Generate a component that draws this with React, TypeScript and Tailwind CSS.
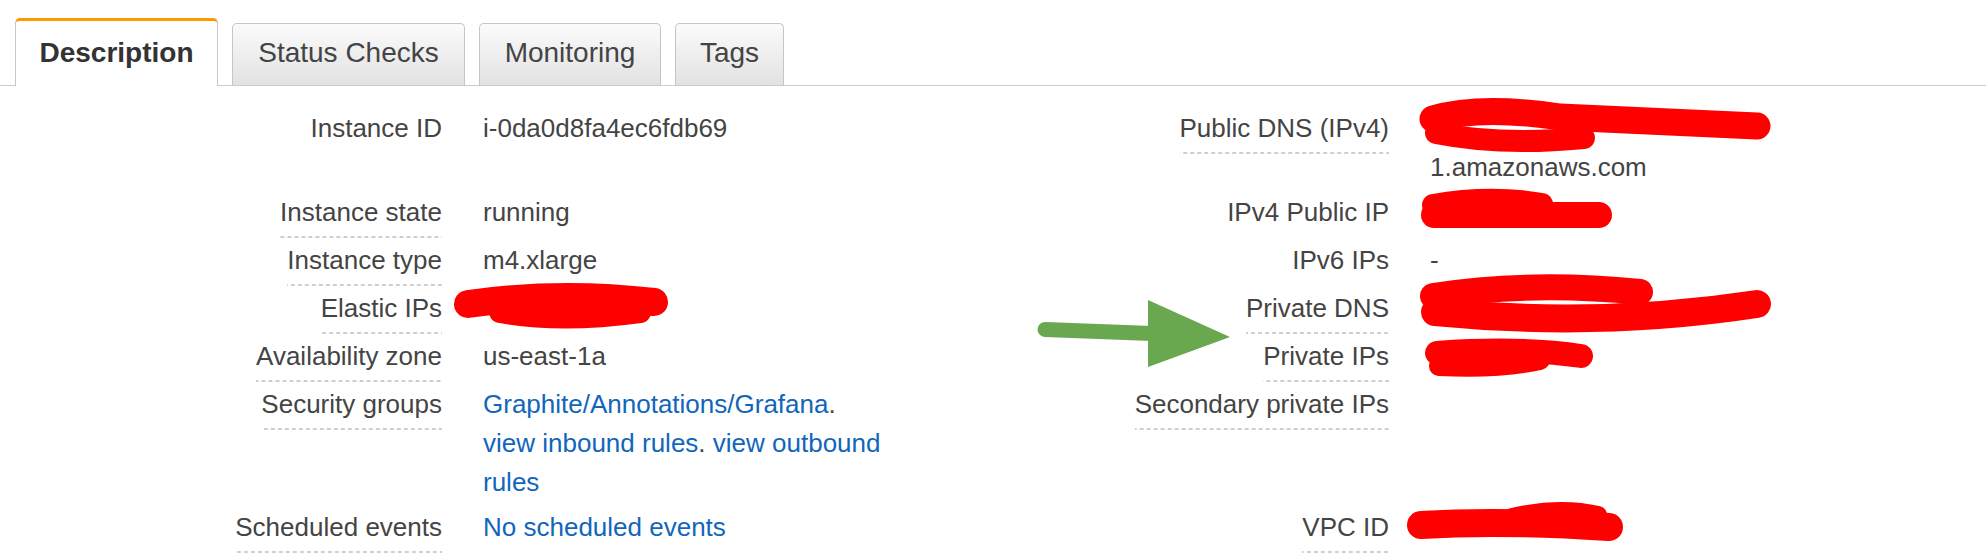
import React from 'react';

type Row = {
  left: string;
  leftLine: boolean;
  leftValue: React.ReactNode;
  right: string;
  rightLine: boolean;
  rightValue: React.ReactNode;
};

const Link = ({ children }: { children: React.ReactNode }) => (
  <a className="text-[#1166bb] cursor-pointer hover:underline">{children}</a>
);

const rows: Row[] = [
  {
    left: 'Instance ID',
    leftLine: false,
    leftValue: 'i-0da0d8fa4ec6fdb69',
    right: 'Public DNS (IPv4)',
    rightLine: true,
    rightValue: (
      <>
        {'\u00a0'}
        <br />
        1.amazonaws.com
      </>
    ),
  },
  { left: 'Instance state', leftLine: true, leftValue: 'running', right: 'IPv4 Public IP', rightLine: false, rightValue: '\u00a0' },
  { left: 'Instance type', leftLine: true, leftValue: 'm4.xlarge', right: 'IPv6 IPs', rightLine: false, rightValue: '-' },
  { left: 'Elastic IPs', leftLine: true, leftValue: '\u00a0', right: 'Private DNS', rightLine: true, rightValue: '\u00a0' },
  { left: 'Availability zone', leftLine: true, leftValue: 'us-east-1a', right: 'Private IPs', rightLine: true, rightValue: '\u00a0' },
  {
    left: 'Security groups',
    leftLine: true,
    leftValue: (
      <>
        <Link>Graphite/Annotations/Grafana</Link>.
        <br />
        <Link>view inbound rules</Link>. <Link>view outbound rules</Link>
      </>
    ),
    right: 'Secondary private IPs',
    rightLine: true,
    rightValue: '',
  },
  {
    left: 'Scheduled events',
    leftLine: true,
    leftValue: <Link>No scheduled events</Link>,
    right: 'VPC ID',
    rightLine: true,
    rightValue: '\u00a0',
  },
];

const Label = ({ text, line }: { text: string; line: boolean }) => (
  <div className="flex justify-end pt-[3px]">
    <span
      className={
        line
          ? 'block whitespace-nowrap leading-[39px] pb-[6px] bg-[linear-gradient(to_right,#cfcfcf_4px,transparent_4px)] bg-size-[7px_2px] bg-repeat-x bg-bottom'
          : 'block whitespace-nowrap leading-[39px] pb-[6px]'
      }
    >
      {text}
    </span>
  </div>
);

const Tabs = () => (
  <div className="h-[86px] flex items-end gap-[14px] pl-[15px] border-b border-[#cccccc]">
    <div className="relative -mb-px w-[203px] h-[68px] bg-white border-t-[3px] border-t-[#ff9900] border-x border-x-[#c8c8c8] rounded-t-[5px] pt-[18px] text-center text-[28px] leading-[28px] font-bold text-[#333]">
      Description
    </div>
    {[
      ['Status Checks', 'w-[233px]'],
      ['Monitoring', 'w-[182px]'],
      ['Tags', 'w-[109px]'],
    ].map(([name, w]) => (
      <div
        key={name}
        className={`${w} h-[62px] border border-b-0 border-[#c6c6c6] rounded-t-[5px] bg-linear-to-b from-[#fbfbfb] to-[#e2e2e2] pt-[15px] text-center text-[28px] leading-[28px] text-[#444]`}
      >
        {name}
      </div>
    ))}
  </div>
);

// red redaction scribbles and the green arrow drawn over the panel
const Marks = () => (
  <svg className="absolute left-0 top-0 pointer-events-none" width={1986} height={554} viewBox="0 0 1986 554">
    <g stroke="#ff0000" strokeLinecap="round" strokeLinejoin="round" fill="none">
      <path d="M1433 119 Q1480 105 1560 117 L1757 126" strokeWidth={27} />
      <path d="M1436 133 Q1500 146 1584 138" strokeWidth={22} />
      <path d="M1433 205 Q1490 195 1542 204" strokeWidth={22} />
      <path d="M1434 215 L1599 215" strokeWidth={26} />
      <path d="M468 304 Q560 291 654 302" strokeWidth={28} />
      <path d="M500 312 Q560 323 640 312" strokeWidth={22} />
      <path d="M1433 296 Q1530 281 1640 292" strokeWidth={26} />
      <path d="M1435 312 Q1600 328 1757 304" strokeWidth={28} />
      <path d="M1437 353 Q1520 347 1581 356" strokeWidth={24} />
      <path d="M1439 366 Q1500 369 1540 360" strokeWidth={20} />
      <path d="M1421 525 Q1500 520 1609 527" strokeWidth={28} />
      <path d="M1512 517 Q1560 506 1598 515" strokeWidth={18} />
    </g>
    <line x1={1045} y1={329.5} x2={1152} y2={333.5} stroke="#6aa84f" strokeWidth={15} strokeLinecap="round" />
    <polygon points="1148,300 1230,337 1148,367" fill="#6aa84f" />
  </svg>
);

export default function App() {
  return (
    <div className="relative w-[1986px] h-[554px] overflow-hidden bg-white text-[#444] font-['Liberation_Sans',Arial,sans-serif]">
      <Tabs />
      <div className="mt-[20px] grid grid-cols-[442px_464px_483px_1fr] items-start text-[26px]">
        {rows.map((r) => (
          <React.Fragment key={r.left}>
            <Label text={r.left} line={r.leftLine} />
            <div className="pl-[41px] py-[3px] leading-[39px]">{r.leftValue}</div>
            <Label text={r.right} line={r.rightLine} />
            <div className="pl-[41px] py-[3px] leading-[39px]">{r.rightValue}</div>
          </React.Fragment>
        ))}
      </div>
      <Marks />
    </div>
  );
}
